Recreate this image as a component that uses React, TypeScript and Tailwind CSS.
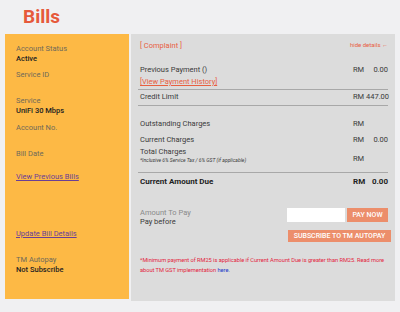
import React from "react";

const F = { fontFamily: "Roboto, 'Liberation Sans', sans-serif" };

function Row({ label, rm, value, className = "" }: { label: React.ReactNode; rm?: string; value?: string; className?: string }) {
  return (
    <div className={"flex items-center leading-[10px] " + className}>
      <div className="flex-1 min-w-0">{label}</div>
      <div className="w-[13px] shrink-0">{rm}</div>
      <div className="w-[22px] shrink-0 text-right whitespace-nowrap">{value}</div>
    </div>
  );
}

export default function App() {
  return (
    <div className="w-[400px] h-[312px] bg-[#f0f0f2] text-[#333]" style={F}>
      <div className="pl-[23px] pt-[6px] h-[34px] text-[19px] font-bold leading-[22px] text-[#e6593b]">Bills</div>
      <div className="flex pl-[5px] gap-[2px]">
        <div className="w-[124px] h-[265px] bg-[#fdb945] pl-[11px] pt-[10px] flex flex-col text-[7.5px] leading-[10px]">
          <div className="text-[#6f6a5a]">Account Status</div>
          <div className="font-medium text-[#222]">Active</div>
          <div className="mt-[6px] text-[#6f6a5a]">Service ID</div>
          <div className="mt-[16px] text-[#6f6a5a]">Service</div>
          <div className="font-medium text-[#222]">UniFi 30 Mbps</div>
          <div className="mt-[7px] text-[#6f6a5a]">Account No.</div>
          <div className="mt-[16px] text-[#6f6a5a]">Bill Date</div>
          <div className="mt-[13px] text-[#6a3f96] underline">View Previous Bills</div>
          <div className="mt-[47px] text-[#6a3f96] underline">Update Bill Details</div>
          <div className="mt-[16px] text-[#6f6a5a]">TM Autopay</div>
          <div className="font-medium text-[#222]">Not Subscribe</div>
        </div>
        <div className="w-[264px] h-[267px] bg-[#dcdcdc] pl-[9px] pr-[7px] pt-[7px] flex flex-col text-[7.5px] text-[#3a3a3a]">
          <div className="flex items-center justify-between leading-[10px] text-[#e8603f]">
            <span>[ Complaint ]</span>
            <span className="text-[6px] -mt-[3px]">hide details ←</span>
          </div>
          <Row className="mt-[14px]" label="Previous Payment ()" rm="RM" value="0.00" />
          <div className="mt-[2px] leading-[10px] text-[#e8603f] underline">[View Payment History]</div>
          <div className="mt-[2px] h-px bg-[#a8a8a8] -ml-[2px]" />
          <Row className="mt-[2px]" label="Credit Limit" rm="RM" value="447.00" />
          <div className="mt-[3px] h-px bg-[#a8a8a8] -ml-[2px]" />
          <Row className="mt-[13px]" label="Outstanding Charges" rm="RM" />
          <Row className="mt-[6px]" label="Current Charges" rm="RM" value="0.00" />
          <div className="mt-[2px] flex items-end">
            <div className="flex-1">
              <div className="leading-[10px]">Total Charges</div>
              <div className="leading-[6px] text-[5px] italic">*Inclusive 6% Service Tax / 6% GST (if applicable)</div>
            </div>
            <div className="w-[35px] leading-[8px]">RM</div>
          </div>
          <div className="mt-[9px] h-px bg-[#a8a8a8] -ml-[2px]" />
          <div className="mt-[3px] flex items-center leading-[11px] text-[8px] font-bold text-[#222]">
            <div className="flex-1">Current Amount Due</div>
            <div className="w-[14px]">RM</div>
            <div className="w-[21px] text-right">0.00</div>
          </div>
          <div className="mt-[21px] flex">
            <div className="flex-1">
              <div className="leading-[9px] text-[#8a8a8a]">Amount To Pay</div>
              <div className="leading-[9px]">Pay before</div>
            </div>
            <div className="flex flex-col items-end gap-[8px]">
              <div className="flex gap-[2px]">
                <div className="w-[58px] h-[14px] bg-white" />
                <div className="w-[41px] h-[14px] bg-[#ec8e6b] text-white text-[7px] font-medium flex items-center justify-center">PAY NOW</div>
              </div>
              <div className="w-[103px] h-[12px] -mr-[3px] bg-[#ec8e6b] text-white text-[7px] font-medium flex items-center justify-center">SUBSCRIBE TO TM AUTOPAY</div>
            </div>
          </div>
          <p className="mt-[13px] text-[5.7px] leading-[10px] tracking-[-0.04px] text-[#e3243c] -mr-[2px]">
            *Minimum payment of RM25 is applicable if Current Amount Due is greater than RM25. Read more about TM GST implementation <span className="text-[#2236c8]">here.</span>
          </p>
        </div>
      </div>
    </div>
  );
}
